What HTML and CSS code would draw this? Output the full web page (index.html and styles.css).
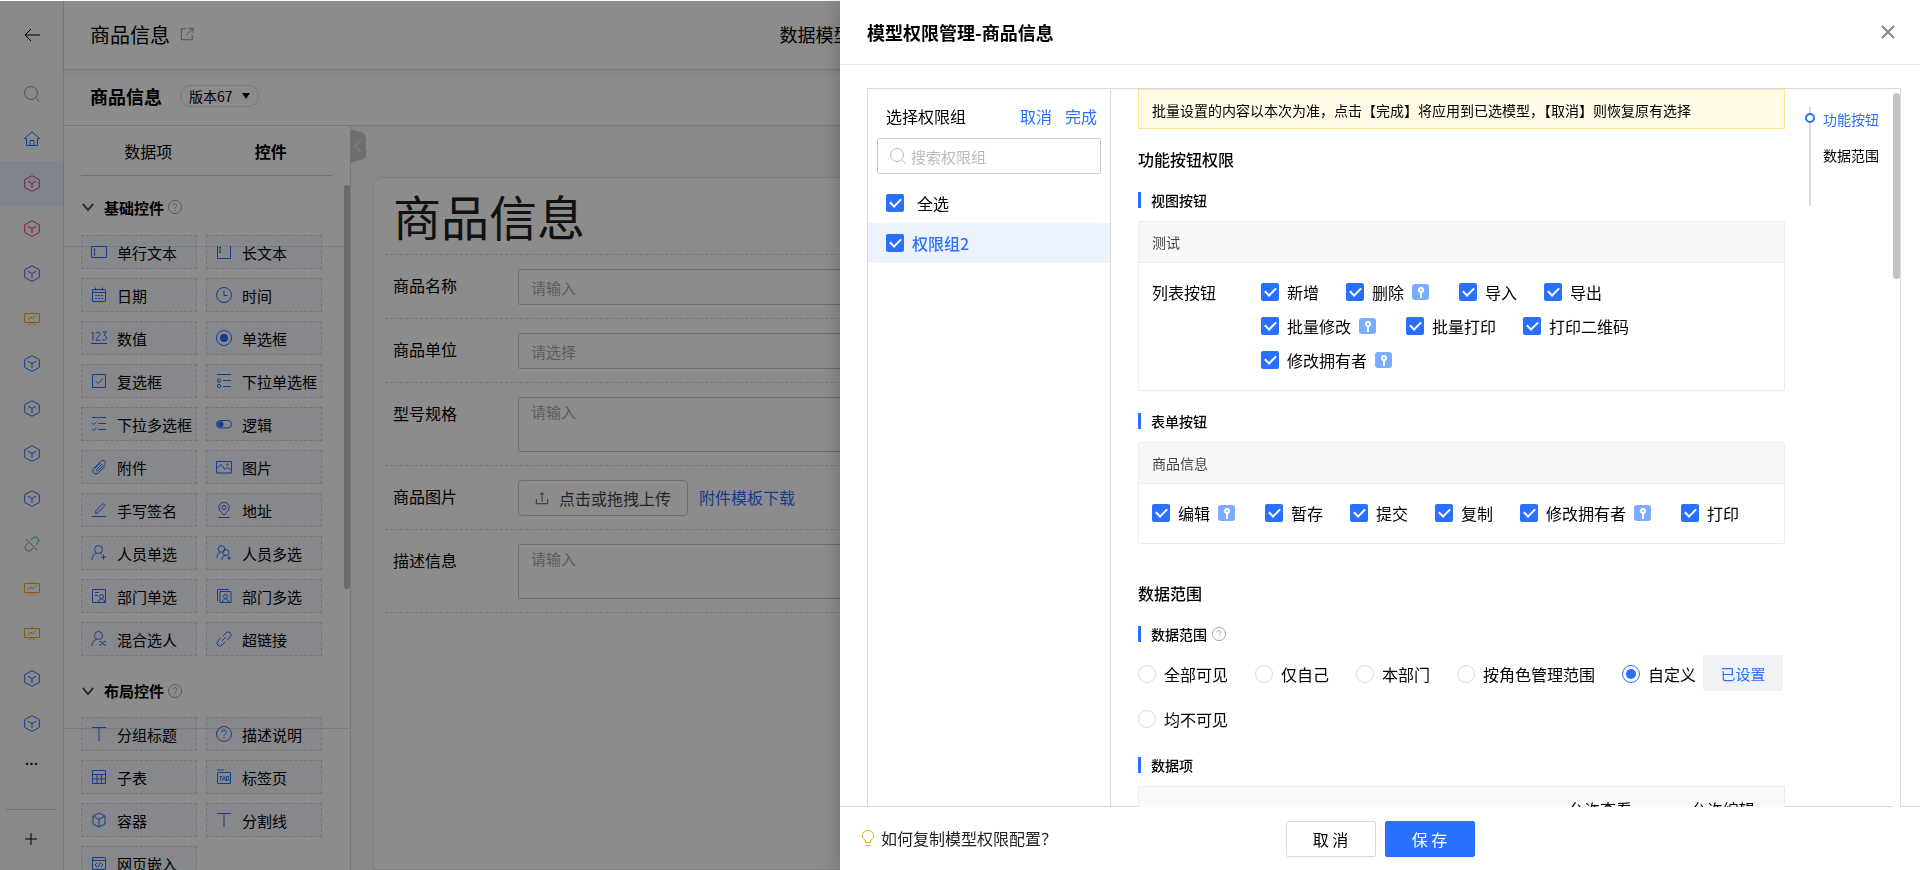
FILE: index.html
```
<!DOCTYPE html>
<html lang="zh-CN">
<head>
    <meta charset="UTF-8">
    <title>商品信息</title>
    <link rel="stylesheet" href="styles.css">
</head>
<body>
    <!-- icons -->
    <svg class="sprite">
        <symbol id="i-back" viewBox="0 0 16 16"><path d="M16 8H1M7 2L1 8l6 6"/></symbol>
        <symbol id="i-search" viewBox="0 0 16 16"><circle cx="7" cy="7" r="6.5"/><path d="M11.8 11.8L15.5 15.5"/></symbol>
        <symbol id="i-home" viewBox="0 0 16 16"><path d="M.5 7.5L8 .8l7.500 6.700H13.500V14.500H2.500V7.500zM6 14.500V9.500h4v5"/></symbol>
        <symbol id="i-cube" viewBox="0 0 16 17"><path d="M8 .7l7.300 4v7.800L8 16.300.7 12.500V4.700zM4 6.300L8 8.500l4-2.200M8 8.500V13"/></symbol>
        <symbol id="i-board" viewBox="0 0 16 16"><path d="M.5 2.500h15v9H.5zM8 .5v2M4 9l3-3 1.500 2L12 4.500M8 11.500L4.500 14.500M8 11.500l3.500 3"/></symbol>
        <symbol id="i-unlink" viewBox="0 0 16 16"><path d="M7 4l2-2a3.300 3.300 0 0 1 4.700 4.700L12 9M9 12l-2 2A3.300 3.300 0 0 1 2 9.300L4 7M2 3l11 11"/></symbol>
        <symbol id="i-plus" viewBox="0 0 16 16"><path d="M8 2v12M2 8h12"/></symbol>
        <symbol id="i-open" viewBox="0 0 16 16"><path d="M7 2H1.500v12.500H14V9M10 1.500h5v5M15 1.500L7 9.500"/></symbol>
        <symbol id="i-down" viewBox="0 0 16 16"><path d="M2 4.500l6 7 6-7"/></symbol>
        <symbol id="i-help" viewBox="0 0 16 16"><circle cx="8" cy="8" r="7.500"/><path d="M5.800 6.200a2.200 2.200 0 1 1 3.400 1.900C8.300 8.600 8 9 8 9.900M8 11.200v1.200"/></symbol>
        <symbol id="i-close" viewBox="0 0 16 16"><path d="M2 2l12 12M14 2L2 14"/></symbol>
        <symbol id="i-text" viewBox="0 0 16 16"><path d="M.5 2.500h15v11H.5zM3.500 5v6M2.500 5h2M2.500 11h2"/></symbol>
        <symbol id="i-longtext" viewBox="0 0 16 16"><path d="M1.500 2v12.500h13V2M4 3.500v5M3 3.500h2M3 8.500h2"/></symbol>
        <symbol id="i-date" viewBox="0 0 16 16"><path d="M1.500 2.500h13v12h-13zM1.500 5.500h13M4.500.5v3M11.500.5v3M4 8.500h2M7 8.500h2M10 8.500h2M4 11.500h2M7 11.500h2M10 11.500h2"/></symbol>
        <symbol id="i-time" viewBox="0 0 16 16"><circle cx="8" cy="8" r="7.500"/><path d="M8 3.500V8.500h3.500"/></symbol>
        <symbol id="i-number" viewBox="0 0 16 16"><path d="M.5 3l1.500-1v8.500M5 4c0-2.500 4-2.500 4 0 0 2-4 4-4 6.200h4.300M11.500 2h4l-2.500 3.200c3.500.2 3.200 5 0 5-1 0-1.500-.4-1.800-1M0 13.500h16"/></symbol>
        <symbol id="i-radio" viewBox="0 0 16 16"><circle cx="8" cy="8" r="7.500"/><circle class="solid" cx="8" cy="8" r="4"/></symbol>
        <symbol id="i-check" viewBox="0 0 16 16"><path d="M1.500 1.500h13v13h-13zM4.500 8l2.500 2.500L12 5.500"/></symbol>
        <symbol id="i-selone" viewBox="0 0 16 16"><path d="M1 1.500h14M7 7.500h8M7 13.500h8"/><circle cx="3" cy="7.500" r="1.700"/><circle cx="3" cy="13" r="1.700"/></symbol>
        <symbol id="i-selmany" viewBox="0 0 16 16"><path d="M1 1.500h14M7 7.500h8M7 13.500h8M1 7l1.500 1.500L5.500 6M1 13l1.500 1.500L5.500 12"/></symbol>
        <symbol id="i-switch" viewBox="0 0 16 16"><rect x=".5" y="4.500" width="15" height="7.500" rx="3.700"/><circle class="solid" cx="4.500" cy="8.200" r="3"/></symbol>
        <symbol id="i-clip" viewBox="0 0 16 16"><path d="M11 5l-5.500 5.500c-.9.900.4 2.300 1.400 1.400L13.500 5.500c2.500-2.600-1-5.500-3.300-3.300L3 9.300c-3.500 3.500 1.300 7.500 4.500 4.400L14.500 7M9 4L3.500 9.500"/></symbol>
        <symbol id="i-image" viewBox="0 0 16 16"><path d="M.5 2.500h15v11.500H.5zM.5 9.500L5 5.500l4 5 2.500-2 4 3"/><circle class="solid" cx="11.500" cy="5.500" r="1"/></symbol>
        <symbol id="i-sign" viewBox="0 0 16 16"><path d="M1 14.500h14M4.500 11.500l.5-3L12 1.500l2 2-7 7z"/></symbol>
        <symbol id="i-place" viewBox="0 0 16 16"><path d="M2 15.500h12M8 13C4.500 9.500 2.800 8 2.800 5.300a5.200 5 0 0 1 10.400 0C13.200 8 11.500 9.500 8 13z"/><circle cx="8" cy="5.500" r="2"/></symbol>
        <symbol id="i-user" viewBox="0 0 16 16"><circle cx="7.500" cy="4.500" r="4"/><path d="M1 15c0-4 2-6 4.500-6.500M9.500 8.500l1.500 1M12.500 9.500v5M10 12h5"/></symbol>
        <symbol id="i-users" viewBox="0 0 16 16"><circle cx="5.500" cy="4" r="3.300"/><path d="M1 13c0-3 1-5 3-5.700M6 15c0-3 1.500-4 3-4.500"/><circle cx="10" cy="7.500" r="3"/><path d="M13 11v4M11 13h4"/></symbol>
        <symbol id="i-dept" viewBox="0 0 16 16"><path d="M1.500 1.500h13v13h-13zM4 4.500h4M4 7.500h3M7.500 14c0-4 6-4 6 0"/><circle cx="10.500" cy="8.500" r="2"/></symbol>
        <symbol id="i-depts" viewBox="0 0 16 16"><path d="M4 3.500h11v11H4zM1.500 13V1.500H13M6.500 14c0-4 6-4 6 0"/><circle cx="9.500" cy="8.500" r="2"/></symbol>
        <symbol id="i-mix" viewBox="0 0 16 16"><circle cx="7.500" cy="4.500" r="4"/><path d="M1 15c0-4 2-6 4.500-6.500M8.500 10.500h1.500l3 3.500h2M8.500 14h1.500l3-3.500h2"/></symbol>
        <symbol id="i-link" viewBox="0 0 16 16"><path d="M7 5l3-3.200a2.800 2.800 0 0 1 4.200 4L11.500 9M9 11l-3 3.200a2.800 2.800 0 0 1-4.200-4L4.500 7M6 10l4-4"/></symbol>
        <symbol id="i-title" viewBox="0 0 16 16"><path d="M1 1.500h14M8 1.500V15"/></symbol>
        <symbol id="i-table" viewBox="0 0 16 16"><path d="M1.500 1.500h13v13h-13zM1.500 5.500h13M1.500 10h13M6 5.500v9M10.500 5.500v9"/></symbol>
        <symbol id="i-tabs" viewBox="0 0 16 16"><path d="M1.500 3.500h13v11h-13zM1 1h7M3.500 7.500h2.500M4.700 7.500v4M6.500 11.500L8 7.500l1.500 4M10.500 7.500v4h1.500c1.300 0 1.300-2 0-2 1.200 0 1-2 0-2z"/></symbol>
        <symbol id="i-box" viewBox="0 0 16 16"><path d="M8 1l6 3v8l-6 3-6-3V4zM2 4l6 3.500L14 4M8 7.500V15"/></symbol>
        <symbol id="i-web" viewBox="0 0 16 16"><path d="M1.500 2.500h13v12h-13zM1.500 5.500h13M6 8l-2 2 2 2M10 8l2 2-2 2M9 7.500l-2 5"/></symbol>
        <symbol id="i-upload" viewBox="0 0 16 16"><path d="M1.500 9v5.500h13V9M8 12V2M5.500 4.500L8 2l2.500 2.500"/></symbol>
        <symbol id="i-bulb" viewBox="0 0 16 18"><path d="M5.500 13.500v-2C3 10 2.300 8.500 2.300 7a5.700 5.700 0 0 1 11.400 0c0 1.500-.7 3-3.200 4.500v2zM5.500 16.500h5"/></symbol>
    </svg>

    <div class="page">
        <nav class="rail">
            <button class="rail-back" aria-label="返回"><svg class="icon"><use href="#i-back"/></svg></button>
            <div class="rail-list">
                <a href="#" class="rail-item gray"><svg class="icon"><use href="#i-search"/></svg></a>
                <a href="#" class="rail-item"><svg class="icon"><use href="#i-home"/></svg></a>
                <a href="#" class="rail-item pink active"><svg class="icon cube"><use href="#i-cube"/></svg></a>
                <a href="#" class="rail-item pink"><svg class="icon cube"><use href="#i-cube"/></svg></a>
                <a href="#" class="rail-item"><svg class="icon cube"><use href="#i-cube"/></svg></a>
                <a href="#" class="rail-item orange"><svg class="icon"><use href="#i-board"/></svg></a>
                <a href="#" class="rail-item"><svg class="icon cube"><use href="#i-cube"/></svg></a>
                <a href="#" class="rail-item"><svg class="icon cube"><use href="#i-cube"/></svg></a>
                <a href="#" class="rail-item"><svg class="icon cube"><use href="#i-cube"/></svg></a>
                <a href="#" class="rail-item"><svg class="icon cube"><use href="#i-cube"/></svg></a>
                <a href="#" class="rail-item green"><svg class="icon"><use href="#i-unlink"/></svg></a>
                <a href="#" class="rail-item orange"><svg class="icon"><use href="#i-board"/></svg></a>
                <a href="#" class="rail-item orange"><svg class="icon"><use href="#i-board"/></svg></a>
                <a href="#" class="rail-item"><svg class="icon cube"><use href="#i-cube"/></svg></a>
                <a href="#" class="rail-item"><svg class="icon cube"><use href="#i-cube"/></svg></a>
                <a href="#" class="rail-item more">...</a>
            </div>
            <button class="rail-add" aria-label="新增"><svg class="icon"><use href="#i-plus"/></svg></button>
        </nav>

        <div class="main">
            <header class="topbar">
                <h1>商品信息</h1>
                <svg class="icon"><use href="#i-open"/></svg>
                <a href="#" class="top-tab">数据模型</a>
            </header>
            <div class="subbar">
                <h2>商品信息</h2>
                <button class="version">版本67<span class="caret"></span></button>
            </div>

            <div class="designer">
                <aside class="palette">
                    <div class="palette-tabs">
                        <button>数据项</button>
                        <button class="active">控件</button>
                    </div>
                    <div class="palette-head">
                        <svg class="icon"><use href="#i-down"/></svg>
                        <b>基础控件</b>
                        <svg class="icon help"><use href="#i-help"/></svg>
                    </div>
                    <div class="palette-grid">
                        <div class="widget"><svg class="icon"><use href="#i-text"/></svg>单行文本</div>
                        <div class="widget"><svg class="icon"><use href="#i-longtext"/></svg>长文本</div>
                        <div class="widget"><svg class="icon"><use href="#i-date"/></svg>日期</div>
                        <div class="widget"><svg class="icon"><use href="#i-time"/></svg>时间</div>
                        <div class="widget"><svg class="icon"><use href="#i-number"/></svg>数值</div>
                        <div class="widget"><svg class="icon"><use href="#i-radio"/></svg>单选框</div>
                        <div class="widget"><svg class="icon"><use href="#i-check"/></svg>复选框</div>
                        <div class="widget"><svg class="icon"><use href="#i-selone"/></svg>下拉单选框</div>
                        <div class="widget"><svg class="icon"><use href="#i-selmany"/></svg>下拉多选框</div>
                        <div class="widget"><svg class="icon"><use href="#i-switch"/></svg>逻辑</div>
                        <div class="widget"><svg class="icon"><use href="#i-clip"/></svg>附件</div>
                        <div class="widget"><svg class="icon"><use href="#i-image"/></svg>图片</div>
                        <div class="widget"><svg class="icon"><use href="#i-sign"/></svg>手写签名</div>
                        <div class="widget"><svg class="icon"><use href="#i-place"/></svg>地址</div>
                        <div class="widget"><svg class="icon"><use href="#i-user"/></svg>人员单选</div>
                        <div class="widget"><svg class="icon"><use href="#i-users"/></svg>人员多选</div>
                        <div class="widget"><svg class="icon"><use href="#i-dept"/></svg>部门单选</div>
                        <div class="widget"><svg class="icon"><use href="#i-depts"/></svg>部门多选</div>
                        <div class="widget"><svg class="icon"><use href="#i-mix"/></svg>混合选人</div>
                        <div class="widget"><svg class="icon"><use href="#i-link"/></svg>超链接</div>
                    </div>
                    <div class="palette-head">
                        <svg class="icon"><use href="#i-down"/></svg>
                        <b>布局控件</b>
                        <svg class="icon help"><use href="#i-help"/></svg>
                    </div>
                    <div class="palette-grid">
                        <div class="widget"><svg class="icon"><use href="#i-title"/></svg>分组标题</div>
                        <div class="widget"><svg class="icon"><use href="#i-help"/></svg>描述说明</div>
                        <div class="widget"><svg class="icon"><use href="#i-table"/></svg>子表</div>
                        <div class="widget"><svg class="icon"><use href="#i-tabs"/></svg>标签页</div>
                        <div class="widget"><svg class="icon"><use href="#i-box"/></svg>容器</div>
                        <div class="widget"><svg class="icon"><use href="#i-title"/></svg>分割线</div>
                        <div class="widget"><svg class="icon"><use href="#i-web"/></svg>网页嵌入</div>
                    </div>
                    <span class="palette-scroll"></span>
                </aside>

                <section class="canvas">
                    <button class="fold" aria-label="收起">
                        <svg viewBox="0 0 16 34"><path class="fold-bg" d="M0 0L12 3.500Q16 5 16 9V25Q16 29 12 30.500L0 34z"/><path class="fold-arrow" d="M11 11L5 17l6 6"/></svg>
                    </button>
                    <form class="form-card">
                        <h3>商品信息</h3>
                        <div class="form-row">
                            <label for="name">商品名称</label>
                            <input id="name" type="text" placeholder="请输入">
                        </div>
                        <div class="form-row">
                            <label for="unit">商品单位</label>
                            <input id="unit" type="text" placeholder="请选择">
                        </div>
                        <div class="form-row">
                            <label for="spec">型号规格</label>
                            <textarea id="spec" placeholder="请输入"></textarea>
                        </div>
                        <div class="form-row">
                            <label for="pic">商品图片</label>
                            <button type="button" id="pic" class="upload"><svg class="icon"><use href="#i-upload"/></svg>点击或拖拽上传</button>
                            <a href="#">附件模板下载</a>
                        </div>
                        <div class="form-row">
                            <label for="desc">描述信息</label>
                            <textarea id="desc" placeholder="请输入"></textarea>
                        </div>
                    </form>
                </section>
            </div>
        </div>
    </div>

    <div class="mask"></div>

    <div class="drawer">
        <header class="drawer-head">
            <h2>模型权限管理-商品信息</h2>
            <button class="close" aria-label="关闭"><svg class="icon"><use href="#i-close"/></svg></button>
        </header>

        <div class="drawer-body">
            <aside class="groups">
                <div class="groups-head">
                    <span>选择权限组</span>
                    <a href="#">取消</a>
                    <a href="#">完成</a>
                </div>
                <label class="search">
                    <svg class="icon"><use href="#i-search"/></svg>
                    <input type="text" placeholder="搜索权限组">
                </label>
                <label class="group all"><input type="checkbox" checked>全选</label>
                <label class="group active"><input type="checkbox" checked>权限组2</label>
            </aside>

            <div class="content">
                <div class="settings">
                    <p class="notice">批量设置的内容以本次为准，点击【完成】将应用到已选模型，【取消】则恢复原有选择</p>

                    <h3>功能按钮权限</h3>
                    <h4>视图按钮</h4>
                    <div class="card">
                        <div class="card-head">测试</div>
                        <div class="card-body">
                            <span class="card-label">列表按钮</span>
                            <div class="checks">
                                <label><input type="checkbox" checked>新增</label>
                                <label><input type="checkbox" checked>删除<i class="key"></i></label>
                                <label><input type="checkbox" checked>导入</label>
                                <label><input type="checkbox" checked>导出</label>
                                <label><input type="checkbox" checked>批量修改<i class="key"></i></label>
                                <label><input type="checkbox" checked>批量打印</label>
                                <label><input type="checkbox" checked>打印二维码</label>
                                <label><input type="checkbox" checked>修改拥有者<i class="key"></i></label>
                            </div>
                        </div>
                    </div>

                    <h4>表单按钮</h4>
                    <div class="card">
                        <div class="card-head">商品信息</div>
                        <div class="card-body">
                            <div class="checks">
                                <label><input type="checkbox" checked>编辑<i class="key"></i></label>
                                <label><input type="checkbox" checked>暂存</label>
                                <label><input type="checkbox" checked>提交</label>
                                <label><input type="checkbox" checked>复制</label>
                                <label><input type="checkbox" checked>修改拥有者<i class="key"></i></label>
                                <label><input type="checkbox" checked>打印</label>
                            </div>
                        </div>
                    </div>

                    <h3 class="range">数据范围</h3>
                    <h4>数据范围<svg class="icon help"><use href="#i-help"/></svg></h4>
                    <div class="radios">
                        <label><input type="radio" name="range">全部可见</label>
                        <label><input type="radio" name="range">仅自己</label>
                        <label><input type="radio" name="range">本部门</label>
                        <label><input type="radio" name="range">按角色管理范围</label>
                        <label class="custom"><input type="radio" name="range" checked>自定义</label>
                        <button class="btn-set">已设置</button>
                        <label><input type="radio" name="range">均不可见</label>
                    </div>

                    <h4>数据项</h4>
                    <table class="fields">
                        <tr><th></th><th class="col">允许查看</th><th class="col">允许编辑</th></tr>
                    </table>
                </div>

                <nav class="anchor">
                    <a href="#" class="active">功能按钮</a>
                    <a href="#">数据范围</a>
                </nav>
                <div class="scroll"><span></span></div>
            </div>
        </div>

        <footer class="drawer-foot">
            <a href="#" class="tip"><svg class="icon"><use href="#i-bulb"/></svg>如何复制模型权限配置？</a>
            <button class="btn">取 消</button>
            <button class="btn primary">保 存</button>
        </footer>
    </div>
</body>
</html>
```
FILE: styles.css
```
*,
*::before,
*::after {
    margin: 0;
    padding: 0;
    box-sizing: border-box;
}

body {
    height: 100vh;
    overflow: hidden;
    font-family: "Noto Sans CJK SC", sans-serif;
    font-size: 16px;
    color: #000;
    background: #fff;
}

button,
input,
textarea {
    font: inherit;
    color: inherit;
    background: none;
    border: none;
    outline: none;
}

a {
    color: #2970ff;
    text-decoration: none;
}

.sprite {
    display: none;
}

.icon {
    width: 16px;
    height: 16px;
    flex: none;
    fill: none;
    stroke: currentColor;
}

.solid {
    fill: currentColor;
    stroke: none;
}

.help {
    width: 14px;
    height: 14px;
    color: #999;
}

.page {
    display: flex;
    height: 100vh;
    padding-top: 1px;
}

.mask {
    position: fixed;
    inset: 1px 0 0 0;
    background: rgba(0, 0, 0, 0.45);
}

/* left rail */
.rail {
    width: 64px;
    flex: none;
    display: flex;
    flex-direction: column;
    background: #fafafa;
    border-right: 1px solid #d9d9d9;
}

.rail-back {
    height: 70px;
    flex: none;
}

.rail-list {
    flex: 1;
    overflow: hidden;
}

.rail-item {
    display: flex;
    align-items: center;
    justify-content: center;
    height: 45px;
    color: #2970ff;
}

.rail-item.active {
    background: #e5eeff;
}

.rail-item.gray { color: #999; }
.rail-item.pink { color: #f5317f; }
.rail-item.orange { color: #f5a623; }
.rail-item.green { color: #3eb7a5; }

.rail-item.more {
    align-items: flex-start;
    color: #000;
}

.cube {
    height: 17px;
}

.rail-add {
    height: 61px;
    flex: none;
    margin: 0 8px 0 6px;
    border-top: 1px solid #d0d0d0;
}

/* header bars */
.main {
    flex: 1;
    min-width: 0;
    display: flex;
    flex-direction: column;
}

.topbar {
    display: flex;
    align-items: center;
    height: 69px;
    flex: none;
    padding: 0 0 2px 26px;
    border-bottom: 1px solid #d9d9d9;
    box-shadow: 0 2px 8px rgba(0, 0, 0, 0.06);
}

.topbar h1 {
    font-size: 20px;
    font-weight: 400;
}

.topbar .icon {
    width: 14px;
    height: 14px;
    margin-left: 10px;
    color: #888;
}

.top-tab {
    margin-left: 32%;
    font-size: 18px;
    color: #000;
}

.subbar {
    display: flex;
    align-items: center;
    height: 56px;
    flex: none;
    padding: 0 0 3px 26px;
    border-bottom: 1px solid #d9d9d9;
}

.subbar h2 {
    font-size: 18px;
    font-weight: 700;
}

.version {
    display: flex;
    align-items: center;
    height: 22px;
    margin-left: 18px;
    padding: 0 8px;
    font-size: 14px;
    border: 1px solid #ddd;
    border-radius: 11px;
}

.caret {
    margin-left: 9px;
    border: 4px solid transparent;
    border-top: 6px solid #000;
    border-bottom: none;
}

.designer {
    flex: 1;
    min-height: 0;
    display: flex;
}

/* widget palette */
.palette {
    position: relative;
    width: 287px;
    flex: none;
    overflow: hidden;
    border-right: 1px solid #d9d9d9;
}

.palette-tabs {
    display: flex;
    height: 50px;
    margin: 0 18px 0 17px;
    padding-left: 6px;
    border-bottom: 1px solid #d0d0d0;
}

.palette-tabs button {
    flex: 1;
}

.palette-tabs .active {
    font-weight: 700;
}

.palette-head {
    display: flex;
    align-items: center;
    height: 71px;
    padding: 0 17px 8px;
    font-size: 15px;
    border-bottom: 1px solid #e2e2e2;
}

.palette-head b {
    margin: 0 4px 0 9px;
    font-weight: 700;
}

.palette-head .icon {
    width: 14px;
    height: 14px;
}

.palette-head .icon:first-child {
    stroke-width: 2;
    color: #444;
}

.palette-grid {
    display: grid;
    grid-template-columns: 1fr 1fr;
    gap: 9px;
    margin: -12px 28px 0 17px;
}

.palette-grid + .palette-head {
    height: 73px;
    padding: 0 17px 3px;
}

.widget {
    display: flex;
    align-items: center;
    gap: 10px;
    height: 34px;
    padding-left: 9px;
    font-size: 15px;
    white-space: nowrap;
    background: rgba(41, 112, 255, 0.05);
    border: 1px dashed #d0d4dc;
}

.widget .icon {
    width: 16px;
    height: 16px;
    color: #2970ff;
}

.palette-scroll {
    position: absolute;
    top: 59px;
    right: 0;
    width: 6px;
    height: 404px;
    background: #c1c4c3;
    border-radius: 3px;
}

/* form canvas */
.canvas {
    position: relative;
    flex: 1;
    display: flex;
    padding: 51px 24px 0 22px;
    background: #f7f7f7;
}

.fold {
    position: absolute;
    top: 3px;
    left: -1px;
    width: 16px;
    height: 34px;
}

.fold svg {
    display: block;
}

.fold-bg {
    fill: #c8c8c8;
}

.fold-arrow {
    fill: none;
    stroke: #fff;
}

.form-card {
    flex: 1;
    padding: 0 11px;
    background: #fff;
    border: 1px solid #e8e8e8;
    border-radius: 10px 10px 0 0;
}

.form-card h3 {
    padding: 3px 8px 4px;
    font-size: 48px;
    line-height: 69px;
    font-weight: 400;
    color: #222;
    border-bottom: 1px dashed #d9d9d9;
}

.form-row {
    display: flex;
    padding: 14px 8px 13px;
    border-bottom: 1px dashed #d9d9d9;
}

.form-row label {
    width: 125px;
    flex: none;
    line-height: 33px;
}

.form-row input,
.form-row textarea,
.upload {
    height: 36px;
    padding: 0 12px;
    border: 1px solid #c8c8c8;
    border-radius: 2px;
}

.form-row input,
.form-row textarea {
    flex: 1;
    font-size: 15px;
}

.form-row textarea {
    height: 55px;
    padding: 3px 12px;
    resize: none;
}

.form-row ::placeholder {
    color: #aaa;
}

.upload {
    display: flex;
    align-items: center;
    gap: 10px;
    margin-right: 11px;
    padding: 0 16px;
    color: #444;
    border-radius: 4px;
}

.upload .icon {
    width: 14px;
    height: 14px;
}

.form-row a {
    line-height: 35px;
}

/* drawer */
.drawer {
    position: fixed;
    top: 0;
    right: 0;
    bottom: 0;
    width: 56.25%;
    display: flex;
    flex-direction: column;
    background: #fff;
    box-shadow: -6px 0 16px rgba(0, 0, 0, 0.15);
}

.drawer-head {
    display: flex;
    align-items: center;
    justify-content: space-between;
    height: 65px;
    flex: none;
    padding: 0 24px 0 27px;
    border-bottom: 1px solid #e8e8e8;
}

.drawer-head h2 {
    font-size: 18px;
    font-weight: 700;
}

.close {
    display: flex;
    color: #888;
}

.close .icon {
    stroke-width: 2;
}

.drawer-body {
    position: relative;
    z-index: 1;
    flex: 1;
    min-height: 0;
    display: flex;
    margin: 23px 19px -1px 27px;
    border: 1px solid #d9d9d9;
    border-bottom: none;
}

.groups {
    width: 243px;
    flex: none;
    border-right: 1px solid #d9d9d9;
}

.groups-head {
    display: flex;
    gap: 13px;
    padding: 15px 13px 10px 18px;
    line-height: 24px;
}

.groups-head span {
    flex: 1;
}

.search {
    display: flex;
    align-items: center;
    gap: 5px;
    height: 36px;
    margin: 0 9px 9px;
    padding: 0 12px;
    border: 1px solid #c5cad6;
    border-radius: 2px;
    color: #bbb;
}

.search input {
    min-width: 0;
    flex: 1;
    font-size: 15px;
}

.search ::placeholder {
    color: #bbb;
}

.group {
    display: flex;
    align-items: center;
    gap: 8px;
    height: 40px;
    padding-left: 18px;
}

.group.all {
    gap: 13px;
}

.group.active {
    color: #2970ff;
    font-weight: 500;
    background: #ecf3fe;
}

input[type="checkbox"],
input[type="radio"] {
    appearance: none;
    display: flex;
    align-items: center;
    justify-content: center;
    width: 18px;
    height: 18px;
    flex: none;
}

input[type="checkbox"] {
    background: #2970ff;
    border-radius: 2px;
}

input[type="checkbox"]::after {
    content: "";
    width: 11px;
    height: 7px;
    margin-top: -3px;
    border: solid #fff;
    border-width: 0 0 2px 2px;
    transform: rotate(-45deg);
}

input[type="radio"] {
    border: 1px solid #d9d9d9;
    border-radius: 50%;
}

input[type="radio"]:checked {
    border-color: #2970ff;
}

input[type="radio"]:checked::after {
    content: "";
    width: 10px;
    height: 10px;
    background: #2970ff;
    border-radius: 50%;
}

.content {
    flex: 1;
    min-width: 0;
    display: flex;
    overflow: hidden;
}

.settings {
    flex: 1;
    min-width: 0;
    padding-left: 27px;
}

.notice {
    height: 40px;
    padding-left: 13px;
    font-size: 14px;
    line-height: 40px;
    white-space: nowrap;
    background: #fffbe6;
    border: 1px solid #ffe58f;
}

.settings h3 {
    margin: 18px 0 17px;
    font-size: 16px;
    line-height: 24px;
    font-weight: 500;
}

.settings h3.range {
    margin-top: 37px;
}

.settings h4 {
    display: flex;
    align-items: center;
    gap: 5px;
    margin-bottom: 9px;
    font-size: 14px;
    line-height: 24px;
    font-weight: 500;
}

.settings h4::before {
    content: "";
    width: 3px;
    height: 16px;
    margin-right: 5px;
    background: #2970ff;
}

.card {
    margin-bottom: 18px;
    border: 1px solid #ededed;
    border-radius: 2px;
}

.card-head {
    padding-left: 13px;
    font-size: 14px;
    line-height: 40px;
    color: #444;
    background: #f7f8fa;
    border-bottom: 1px solid #ededed;
}

.card-body {
    display: flex;
    padding: 12px 13px 13px;
    line-height: 34px;
}

.card-label {
    width: 109px;
    flex: none;
}

.checks {
    display: flex;
    flex-wrap: wrap;
}

.checks label,
.radios label {
    display: flex;
    align-items: center;
    gap: 8px;
    margin-right: 27px;
}

.key {
    position: relative;
    width: 17px;
    height: 16px;
    margin-right: 3px;
    background: #7badff;
    border-radius: 3px;
}

.key::before {
    content: "";
    position: absolute;
    top: 3px;
    left: 6px;
    width: 6px;
    height: 6px;
    border: 2px solid #fff;
    border-radius: 50%;
}

.key::after {
    content: "";
    position: absolute;
    top: 8px;
    left: 8px;
    width: 2px;
    height: 6px;
    background: #fff;
}

.radios {
    display: flex;
    flex-wrap: wrap;
    margin: -4px 0 12px;
}

.radios label {
    height: 45px;
}

.radios .custom {
    margin-right: 7px;
}

.btn-set {
    width: 80px;
    height: 36px;
    margin-top: 4px;
    font-size: 15px;
    color: #2970ff;
    background: #f0f2f6;
    border-radius: 2px;
}

.fields {
    width: 100%;
    border: 1px solid #ededed;
    background: #fafafa;
    border-collapse: collapse;
}

.fields th {
    height: 44px;
    font-weight: 400;
}

.fields .col {
    width: 123px;
}

.anchor {
    width: 70px;
    height: 99px;
    flex: none;
    margin: 18px 14px 0 24px;
    padding-left: 12px;
    border-left: 2px solid #d9d9d9;
}

.anchor a {
    position: relative;
    display: block;
    margin-bottom: 12px;
    font-size: 14px;
    line-height: 24px;
    white-space: nowrap;
    color: #000;
}

.anchor .active {
    color: #2970ff;
}

.anchor .active::before {
    content: "";
    position: absolute;
    left: -18px;
    top: 6px;
    width: 10px;
    height: 10px;
    background: #fff;
    border: 2px solid #2970ff;
    border-radius: 50%;
}

.scroll {
    width: 7px;
    flex: none;
    padding-top: 4px;
    background: #fff;
}

.scroll span {
    display: block;
    height: 186px;
    background: #c1c3c5;
    border-radius: 4px;
}

.drawer-foot {
    position: relative;
    display: flex;
    align-items: center;
    justify-content: center;
    gap: 9px;
    height: 64px;
    flex: none;
    border-top: 1px solid #d9d9d9;
}

.tip {
    position: absolute;
    left: 20px;
    display: flex;
    align-items: center;
    gap: 5px;
    padding-bottom: 2px;
    color: #222;
}

.tip .icon {
    height: 18px;
    color: #f5a623;
}

.btn {
    width: 90px;
    height: 36px;
    border: 1px solid #d9d9d9;
    border-radius: 2px;
}

.btn.primary {
    color: #fff;
    background: #2970ff;
    border-color: #2970ff;
}
```
